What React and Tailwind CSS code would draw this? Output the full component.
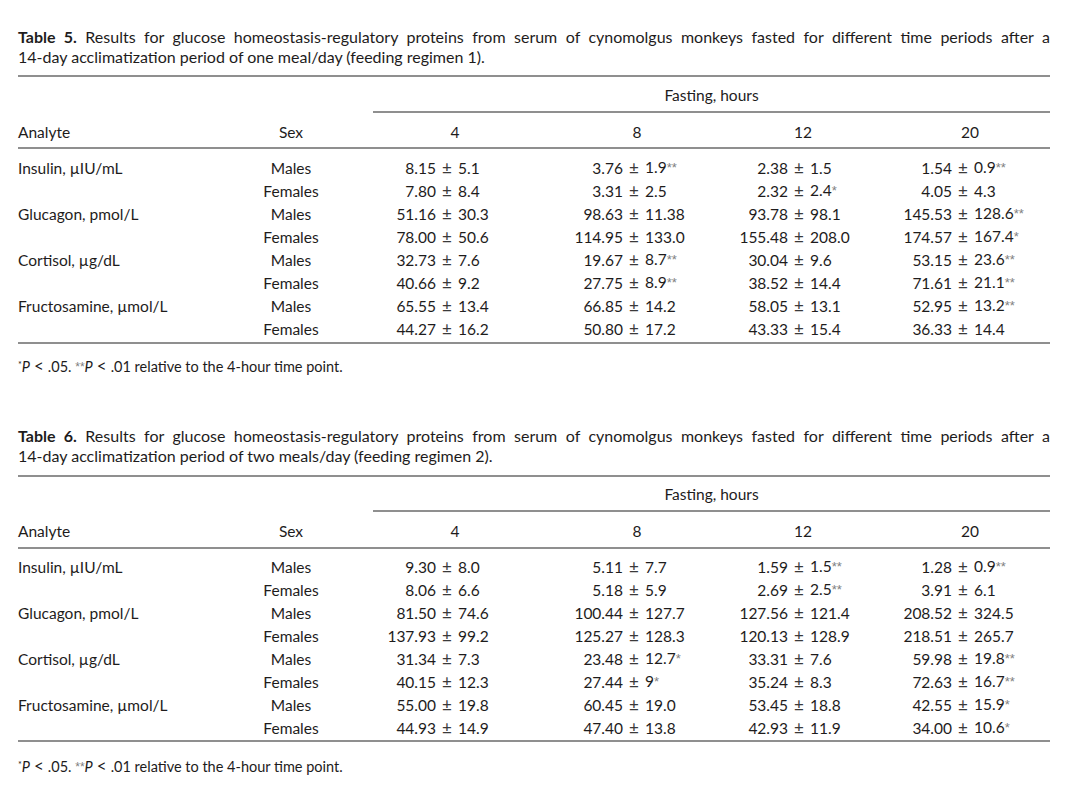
import React from "react";

const FONT = { fontFamily: "Lato, 'Open Sans', 'Noto Sans', sans-serif" };

const analytes = [
  "Insulin, µIU/mL",
  "Glucagon, pmol/L",
  "Cortisol, µg/dL",
  "Fructosamine, µmol/L",
];

const t5 = [
  [["8.15", "5.1", ""], ["3.76", "1.9", "**"], ["2.38", "1.5", ""], ["1.54", "0.9", "**"]],
  [["7.80", "8.4", ""], ["3.31", "2.5", ""], ["2.32", "2.4", "*"], ["4.05", "4.3", ""]],
  [["51.16", "30.3", ""], ["98.63", "11.38", ""], ["93.78", "98.1", ""], ["145.53", "128.6", "**"]],
  [["78.00", "50.6", ""], ["114.95", "133.0", ""], ["155.48", "208.0", ""], ["174.57", "167.4", "*"]],
  [["32.73", "7.6", ""], ["19.67", "8.7", "**"], ["30.04", "9.6", ""], ["53.15", "23.6", "**"]],
  [["40.66", "9.2", ""], ["27.75", "8.9", "**"], ["38.52", "14.4", ""], ["71.61", "21.1", "**"]],
  [["65.55", "13.4", ""], ["66.85", "14.2", ""], ["58.05", "13.1", ""], ["52.95", "13.2", "**"]],
  [["44.27", "16.2", ""], ["50.80", "17.2", ""], ["43.33", "15.4", ""], ["36.33", "14.4", ""]],
];

const t6 = [
  [["9.30", "8.0", ""], ["5.11", "7.7", ""], ["1.59", "1.5", "**"], ["1.28", "0.9", "**"]],
  [["8.06", "6.6", ""], ["5.18", "5.9", ""], ["2.69", "2.5", "**"], ["3.91", "6.1", ""]],
  [["81.50", "74.6", ""], ["100.44", "127.7", ""], ["127.56", "121.4", ""], ["208.52", "324.5", ""]],
  [["137.93", "99.2", ""], ["125.27", "128.3", ""], ["120.13", "128.9", ""], ["218.51", "265.7", ""]],
  [["31.34", "7.3", ""], ["23.48", "12.7", "*"], ["33.31", "7.6", ""], ["59.98", "19.8", "**"]],
  [["40.15", "12.3", ""], ["27.44", "9", "*"], ["35.24", "8.3", ""], ["72.63", "16.7", "**"]],
  [["55.00", "19.8", ""], ["60.45", "19.0", ""], ["53.45", "18.8", ""], ["42.55", "15.9", "*"]],
  [["44.93", "14.9", ""], ["47.40", "13.8", ""], ["42.93", "11.9", ""], ["34.00", "10.6", "*"]],
];

function Rule() {
  return <div className="h-[2px] w-full bg-[#8f8f8f]" />;
}

function Stars({ s }) {
  if (!s) return null;
  return (
    <span className="relative -top-[1px] font-['Liberation_Sans'] text-[13px] text-[#808080]">
      {s}
    </span>
  );
}

function Cell({ v, left, ml }) {
  return (
    <div className={`flex w-[164px] shrink-0 items-center ${ml}`}>
      <span className={`${left} shrink-0 text-right`}>{v[0]}</span>
      <span className="w-[22px] shrink-0 text-center text-[17px] text-[#3a3a3a]">±</span>
      <span className="whitespace-nowrap">
        {v[1]}
        <Stars s={v[2]} />
      </span>
    </div>
  );
}

function DataRow({ analyte, sex, vals }) {
  return (
    <div className="flex h-[23px] items-center leading-[20px]">
      <div className="w-[220px] shrink-0">{analyte}</div>
      <div className="w-[106px] shrink-0 text-center">{sex}</div>
      <Cell v={vals[0]} left="w-[63px]" ml="ml-[29px]" />
      <Cell v={vals[1]} left="w-[68px]" ml="ml-[18px]" />
      <Cell v={vals[2]} left="w-[67px]" ml="ml-[2px]" />
      <Cell v={vals[3]} left="w-[64px]" ml="ml-[3px]" />
    </div>
  );
}

function Lt() {
  return <span className="mx-[4px] text-[17px] leading-[16px]">&lt;</span>;
}

function Table({ num, meals, regimen, data, cfg }) {
  return (
    <div className={cfg.top}>
      <div className="text-[16px] leading-[20px] text-[#1e1c1c]">
        <div className="whitespace-nowrap text-justify [text-align-last:justify]">
          <span className="font-bold">Table {num}.</span> Results for glucose homeostasis-regulatory
          proteins from serum of cynomolgus monkeys fasted for different time periods after a
        </div>
        <div>
          14-day acclimatization period of {meals} (feeding regimen {regimen}).
        </div>
      </div>
      <div className={cfg.rule1}>
        <Rule />
      </div>
      <div className={`text-[15.5px] text-[#1e1c1c] ${cfg.fast}`}>
        <div className="flex leading-[20px]">
          <div className="ml-[355px] w-[677px] text-center">Fasting, hours</div>
        </div>
      </div>
      <div className="ml-[355px]">
        <Rule />
      </div>
      <div className={`flex text-[15.5px] leading-[20px] text-[#1e1c1c] ${cfg.head}`}>
        <div className="w-[220px] shrink-0">Analyte</div>
        <div className="w-[106px] shrink-0 text-center">Sex</div>
        <div className="ml-[29px] w-[164px] shrink-0 text-center">4</div>
        <div className="ml-[18px] w-[164px] shrink-0 text-center">8</div>
        <div className="ml-[2px] w-[164px] shrink-0 text-center">12</div>
        <div className="ml-[3px] w-[164px] shrink-0 text-center">20</div>
      </div>
      <Rule />
      <div className={`text-[15.5px] text-[#1e1c1c] ${cfg.body}`}>
        {data.map((vals, i) => (
          <DataRow
            key={i}
            analyte={i % 2 === 0 ? analytes[i / 2] : ""}
            sex={i % 2 === 0 ? "Males" : "Females"}
            vals={vals}
          />
        ))}
      </div>
      <Rule />
      <div className={`h-[20px] text-[14.5px] leading-[20px] text-[#1e1c1c] ${cfg.foot}`}>
        <span className="relative -top-[4px] text-[9px]">*</span>
        <span className="italic">P</span>
        <Lt />
        .05.{" "}
        <span className="relative -top-[1px] font-['Liberation_Sans'] text-[12px] text-[#808080]">**</span>
        <span className="italic">P</span>
        <Lt />
        .01 relative to the 4-hour time point.
      </div>
    </div>
  );
}

export default function App() {
  return (
    <div className="h-[785px] w-[1080px] overflow-hidden bg-white pl-[18px] pr-[30px]" style={FONT}>
      <Table
        num={5}
        meals="one meal/day"
        regimen="1"
        data={t5}
        cfg={{
          top: "pt-[27px]",
          rule1: "mt-[8px]",
          fast: "h-[34px] pt-[8px]",
          head: "h-[34px] pt-[9px]",
          body: "pt-[7px] pb-[2px]",
          foot: "mt-[13px]",
        }}
      />
      <Table
        num={6}
        meals="two meals/day"
        regimen="2"
        data={t6}
        cfg={{
          top: "mt-[49px]",
          rule1: "mt-[9px]",
          fast: "h-[33px] pt-[7px]",
          head: "h-[35px] pt-[9px]",
          body: "pt-[6px] pb-[1px]",
          foot: "mt-[15px]",
        }}
      />
    </div>
  );
}
